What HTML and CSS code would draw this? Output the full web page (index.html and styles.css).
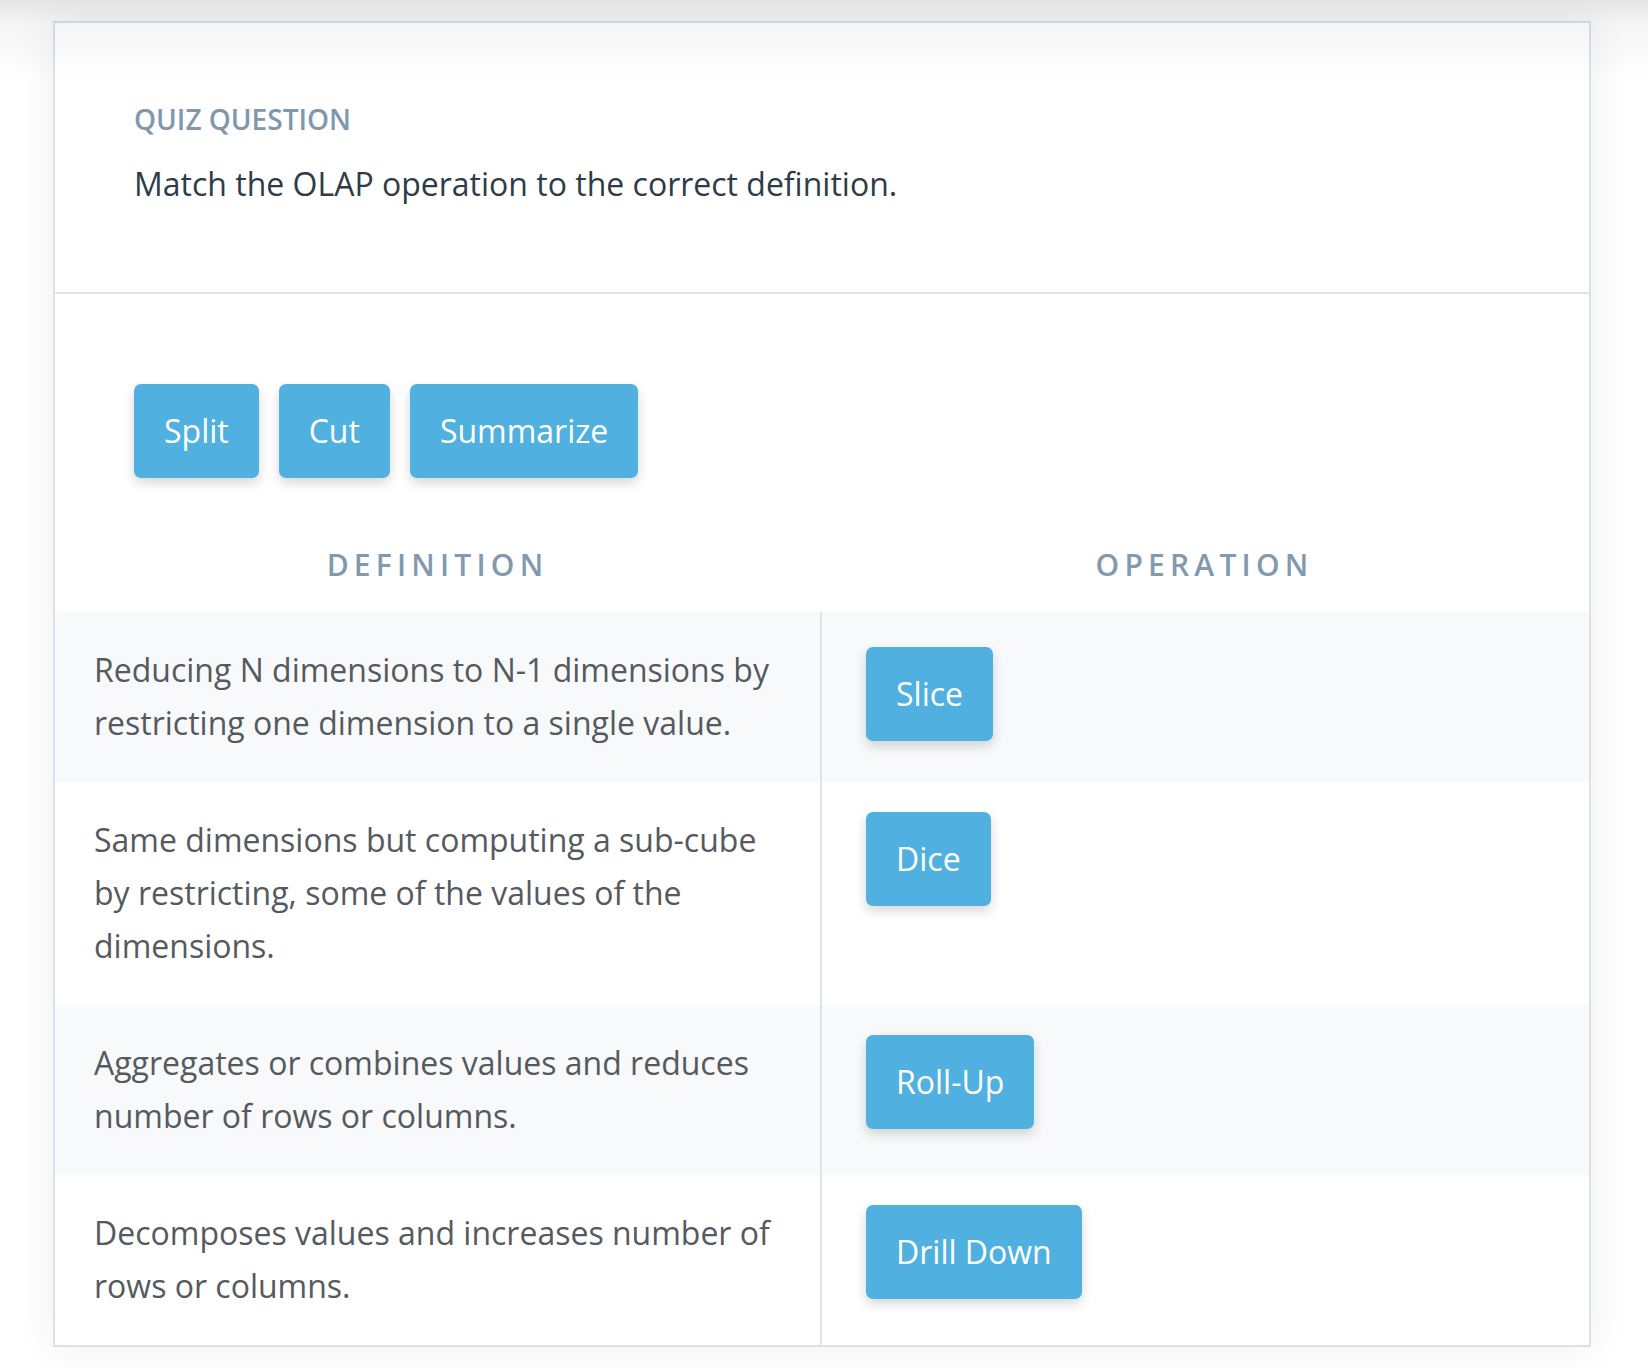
FILE: index.html
```html
<!DOCTYPE html>
<html lang="en">
<head>
<meta charset="utf-8">
<title>Quiz Question</title>
<link rel="stylesheet" href="styles.css">
</head>
<body>
<div class="top-shade"></div>
<main class="card">
  <header class="card-head">
    <div class="label">QUIZ QUESTION</div>
    <div class="question">Match the OLAP operation to the correct definition.</div>
  </header>
  <section class="card-body">
    <div class="bank">
      <span class="chip">Split</span>
      <span class="chip">Cut</span>
      <span class="chip">Summarize</span>
    </div>
    <div class="grid">
      <div class="th">DEFINITION</div>
      <div class="th">OPERATION</div>

      <div class="def shade">Reducing N dimensions to N-1 dimensions by restricting one dimension to a single value.</div>
      <div class="op shade first"><span class="chip">Slice</span></div>

      <div class="def">Same dimensions but computing a sub-cube by restricting, some of the values of the dimensions.</div>
      <div class="op"><span class="chip">Dice</span></div>

      <div class="def shade">Aggregates or combines values and reduces number of rows or columns.</div>
      <div class="op shade"><span class="chip">Roll-Up</span></div>

      <div class="def">Decomposes values and increases number of rows or columns.</div>
      <div class="op"><span class="chip">Drill Down</span></div>
    </div>
  </section>
</main>
</body>
</html>
```
FILE: styles.css
```css
html, body {
  margin: 0;
  padding: 0;
}
body {
  background: #ffffff;
  font-family: "Open Sans", "Noto Sans", sans-serif;
  width: 1648px;
  height: 1368px;
  overflow: hidden;
}
.top-shade {
  position: fixed;
  left: 0;
  top: 0;
  width: 100%;
  height: 80px;
  background: linear-gradient(to bottom, rgba(0, 0, 0, 0.1) 0, rgba(0, 0, 0, 0.04) 25px, rgba(0, 0, 0, 0) 80px);
  pointer-events: none;
  z-index: 5;
}
.card {
  box-sizing: border-box;
  width: 1538px;
  margin: 21px 0 0 53px;
  border: 2px solid #dbe1e8;
  background: #ffffff;
  box-shadow: 0 0 40px rgba(0, 0, 0, 0.07);
}
.card-head {
  padding: 75px 79px 84px;
  border-bottom: 2px solid #dfe4ea;
}
.label {
  font-size: 28px;
  line-height: 42px;
  font-weight: 600;
  color: #8197ad;
  margin-bottom: 20px;
}
.question {
  font-size: 32px;
  line-height: 48px;
  color: #2e3c49;
}
.card-body {
  padding-top: 90px;
}
.bank {
  display: flex;
  gap: 20px;
  padding: 0 79px;
  margin-bottom: 64px;
}
.chip {
  display: inline-block;
  background: #50b1e0;
  color: #ffffff;
  font-size: 32px;
  line-height: 48px;
  padding: 23px 30px;
  border-radius: 7px;
  box-shadow: 0 5px 12px rgba(0, 0, 0, 0.16);
}
.grid {
  display: grid;
  grid-template-columns: 765px 1fr;
}
.th {
  text-align: center;
  font-size: 30px;
  line-height: 45px;
  font-weight: 600;
  letter-spacing: 5.2px;
  color: #8399ae;
  padding-bottom: 25px;
}
.def {
  font-size: 32px;
  line-height: 53px;
  color: #555a5f;
  padding: 31px 37px 33px 39px;
}
.op {
  border-left: 2px solid #dde3ea;
  padding: 30px 44px;
}
.op.first {
  padding-top: 35px;
}
.shade {
  background: #f8f9fb;
}
```
